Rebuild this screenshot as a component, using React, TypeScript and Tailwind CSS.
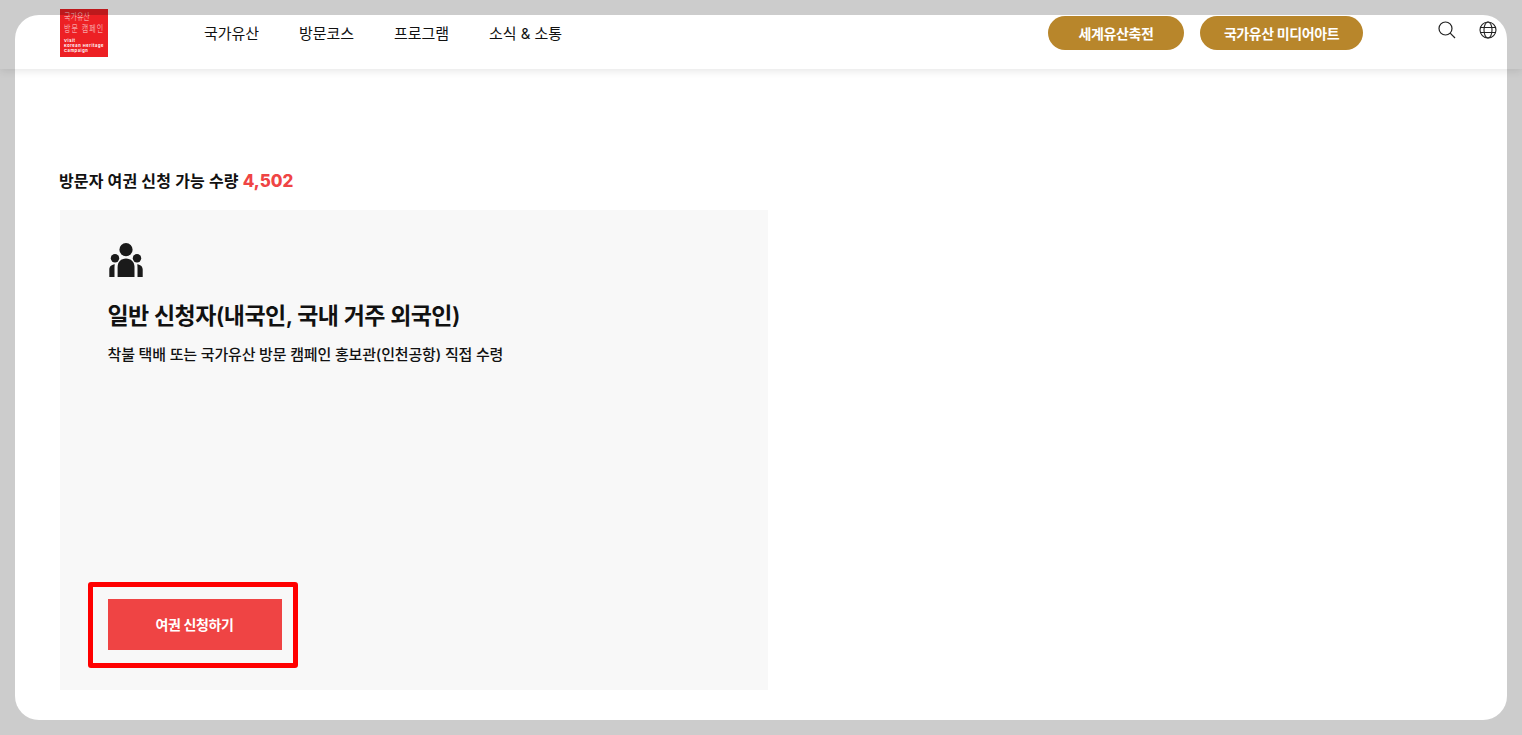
const font = { fontFamily: '"Inter", "Noto Sans CJK KR", sans-serif' };

function PeopleIcon() {
  return (
    <svg width="34" height="34" viewBox="0 0 34 34" className="ml-[1px] block" fill="#1a1a1a">
      <circle cx="17" cy="6.700" r="6.600" />
      <circle cx="6" cy="15.300" r="4.200" />
      <circle cx="28" cy="15.300" r="4.200" />
      <path d="M8.600 34V24C8.600 19 12 15.500 17 15.500S25.500 19 25.500 24V34Z" />
      <path d="M0.300 34V26.500C0.300 24 2 21.800 5.800 21.300C5.500 22.800 5.500 24 5.500 26V34Z" />
      <path d="M33.700 34V26.500C33.700 24 32 21.800 28.200 21.300C28.500 22.800 28.500 24 28.500 26V34Z" />
    </svg>
  );
}

function Logo() {
  return (
    <div className="flex h-12 w-12 shrink-0 flex-col overflow-hidden bg-[#ed2024] pt-[3px] pl-[4px] text-white">
      <div className="origin-top scale-y-[1.3] text-[7px] leading-[8px] font-light whitespace-nowrap opacity-80">국가유산</div>
      <div className="mt-[4px] origin-top scale-y-[1.3] text-[7px] leading-[8px] font-light tracking-[1px] whitespace-nowrap opacity-80">방문 캠페인</div>
      <div className="mt-auto pb-[4px] text-[4px] leading-[5px] font-bold tracking-[0.55px]">
        <div>Visit</div>
        <div className="whitespace-nowrap">Korean Heritage</div>
        <div>Campaign</div>
      </div>
    </div>
  );
}

export default function App() {
  return (
    <div className="relative h-[735px] w-full overflow-hidden bg-white text-[#111]" style={font}>
      <header className="relative h-[69px] bg-white pr-[25px] pl-[60px] shadow-[0_2px_8px_rgba(0,0,0,0.1)]">
        <div className="flex h-[66px] items-start">
          <div className="mt-[9px]">
            <Logo />
          </div>
          <nav className="mt-[24px] ml-[96px] flex gap-[40px] text-[15px] leading-[20px] font-normal tracking-[-0.05px]">
            <a>국가유산</a>
            <a>방문코스</a>
            <a>프로그램</a>
            <a>소식 &amp; 소통</a>
          </nav>
          <div className="mt-[16px] ml-auto flex gap-4 text-[14px] font-bold tracking-[-0.4px] text-white">
            <a className="flex h-[34px] w-[136px] items-center justify-center rounded-full bg-[#b8862b]">세계유산축전</a>
            <a className="flex h-[34px] w-[163px] items-center justify-center rounded-full bg-[#b8862b]">국가유산 미디어아트</a>
          </div>
          <div className="mt-[21px] ml-[75px] flex items-center gap-[23px]">
            <svg width="18" height="18" viewBox="0 0 18 18" fill="none" stroke="#222" strokeWidth="1.2">
              <circle cx="7.500" cy="7.500" r="6.500" />
              <path d="M12.200 12.200 17 17" />
            </svg>
            <svg width="18" height="18" viewBox="0 0 18 18" fill="none" stroke="#222" strokeWidth="1.100">
              <circle cx="9" cy="9" r="8" />
              <ellipse cx="9" cy="9" rx="4" ry="8" />
              <path d="M1 6.500h16M1 11.500h16" />
            </svg>
          </div>
        </div>
      </header>

      <main className="pt-[100px] pl-[60px]">
        <h2 className="-ml-[1px] text-[16px] leading-[24px] font-semibold tracking-[0.1px]">
          방문자 여권 신청 가능 수량 <span className="text-[17px] font-extrabold tracking-normal text-[#ef4444]">4,502</span>
        </h2>
        <section className="mt-[17px] flex h-[480px] w-[708px] flex-col bg-[#f8f8f8] px-[48px] pt-[33px] pb-[40px]">
          <PeopleIcon />
          <h3 className="mt-[21px] -ml-[0.5px] text-[23px] leading-[36px] font-semibold tracking-[-0.55px]">일반 신청자(내국인, 국내 거주 외국인)</h3>
          <p className="mt-[11px] -ml-[0.5px] text-[15px] leading-[20px] font-medium tracking-[-0.17px]">착불 택배 또는 국가유산 방문 캠페인 홍보관(인천공항) 직접 수령</p>
          <a className="mt-auto flex h-[51px] w-[174px] items-center justify-center bg-[#ef4444] pr-[1px] text-[14px] font-bold tracking-[-0.4px] text-white">여권 신청하기</a>
        </section>
      </main>

      <div className="pointer-events-none absolute top-[15px] left-[15px] h-[705px] w-[1492px] rounded-[24px] shadow-[0_0_0_1600px_rgba(0,0,0,0.2)]" />
      <div className="pointer-events-none absolute top-[582px] left-[88px] h-[86px] w-[210px] rounded-[3px] border-[5px] border-[#ff0000]" />
    </div>
  );
}
